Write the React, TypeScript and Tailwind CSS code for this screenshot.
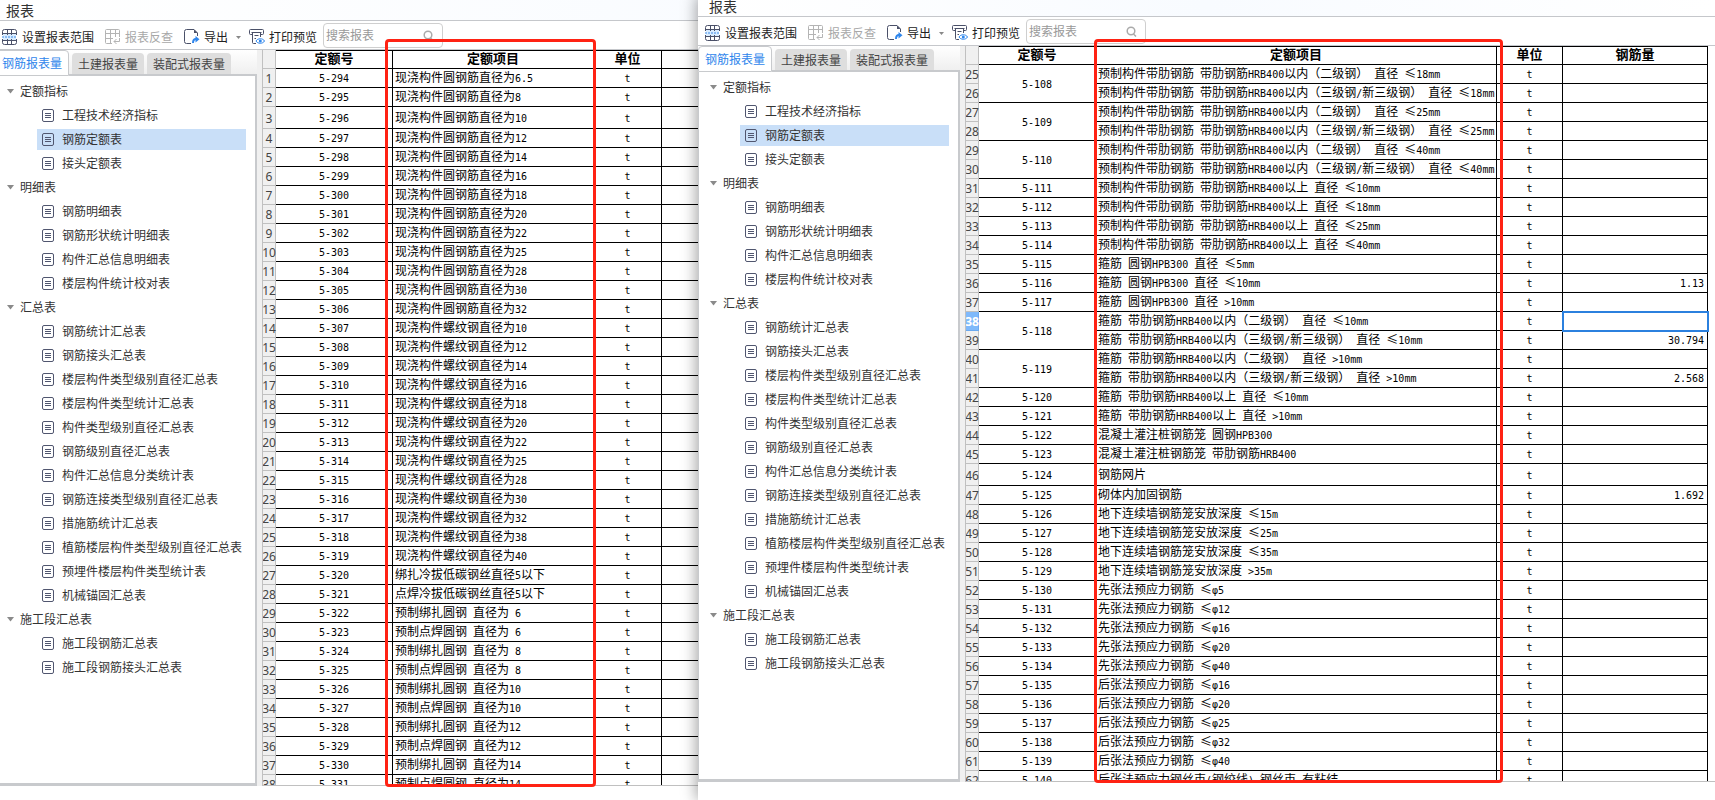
import { ReactNode } from "react";

interface QuotaRow {
  no: number;
  code?: string;
  span?: number;
  item: string;
  amount?: string;
  tall?: boolean;
  selected?: boolean;
}

interface SheetProps {
  rows: QuotaRow[];
  itemWidth: string;
  unitWidth: string;
  amountTitle?: string;
}

const barTypes = [6.5, 8, 10, 12, 14, 16, 18, 20, 22, 25, 28, 30, 32].map((d) => `现浇构件圆钢筋直径为${d}`);
const threadTypes = [10, 12, 14, 16, 18, 20, 22, 25, 28, 30, 32, 38, 40].map((d) => `现浇构件螺纹钢直径为${d}`);

const leftItems = [
  ...barTypes,
  ...threadTypes,
  "绑扎冷拔低碳钢丝直径5以下",
  "点焊冷拔低碳钢丝直径5以下",
  "预制绑扎圆钢 直径为 6",
  "预制点焊圆钢 直径为 6",
  "预制绑扎圆钢 直径为 8",
  "预制点焊圆钢 直径为 8",
  "预制绑扎圆钢 直径为10",
  "预制点焊圆钢 直径为10",
  "预制绑扎圆钢 直径为12",
  "预制点焊圆钢 直径为12",
  "预制绑扎圆钢 直径为14",
  "预制点焊圆钢 直径为14",
];

const leftRows: QuotaRow[] = leftItems.map((item, i) => ({
  no: i + 1,
  code: `5-${294 + i}`,
  item,
  tall: i === 2,
}));

const rightRows: QuotaRow[] = [
  { no: 25, code: "5-108", span: 2, item: "预制构件带肋钢筋 带肋钢筋HRB400以内（二级钢） 直径 ≤18mm" },
  { no: 26, item: "预制构件带肋钢筋 带肋钢筋HRB400以内（三级钢/新三级钢） 直径 ≤18mm" },
  { no: 27, code: "5-109", span: 2, item: "预制构件带肋钢筋 带肋钢筋HRB400以内（二级钢） 直径 ≤25mm" },
  { no: 28, item: "预制构件带肋钢筋 带肋钢筋HRB400以内（三级钢/新三级钢） 直径 ≤25mm" },
  { no: 29, code: "5-110", span: 2, item: "预制构件带肋钢筋 带肋钢筋HRB400以内（二级钢） 直径 ≤40mm" },
  { no: 30, item: "预制构件带肋钢筋 带肋钢筋HRB400以内（三级钢/新三级钢） 直径 ≤40mm" },
  { no: 31, code: "5-111", item: "预制构件带肋钢筋 带肋钢筋HRB400以上 直径 ≤10mm" },
  { no: 32, code: "5-112", item: "预制构件带肋钢筋 带肋钢筋HRB400以上 直径 ≤18mm" },
  { no: 33, code: "5-113", item: "预制构件带肋钢筋 带肋钢筋HRB400以上 直径 ≤25mm" },
  { no: 34, code: "5-114", item: "预制构件带肋钢筋 带肋钢筋HRB400以上 直径 ≤40mm" },
  { no: 35, code: "5-115", item: "箍筋 圆钢HPB300 直径 ≤5mm" },
  { no: 36, code: "5-116", item: "箍筋 圆钢HPB300 直径 ≤10mm", amount: "1.13" },
  { no: 37, code: "5-117", item: "箍筋 圆钢HPB300 直径 >10mm" },
  { no: 38, code: "5-118", span: 2, item: "箍筋 带肋钢筋HRB400以内（二级钢） 直径 ≤10mm", selected: true },
  { no: 39, item: "箍筋 带肋钢筋HRB400以内（三级钢/新三级钢） 直径 ≤10mm", amount: "30.794" },
  { no: 40, code: "5-119", span: 2, item: "箍筋 带肋钢筋HRB400以内（二级钢） 直径 >10mm" },
  { no: 41, item: "箍筋 带肋钢筋HRB400以内（三级钢/新三级钢） 直径 >10mm", amount: "2.568" },
  { no: 42, code: "5-120", item: "箍筋 带肋钢筋HRB400以上 直径 ≤10mm" },
  { no: 43, code: "5-121", item: "箍筋 带肋钢筋HRB400以上 直径 >10mm" },
  { no: 44, code: "5-122", item: "混凝土灌注桩钢筋笼 圆钢HPB300" },
  { no: 45, code: "5-123", item: "混凝土灌注桩钢筋笼 带肋钢筋HRB400" },
  { no: 46, code: "5-124", item: "钢筋网片", tall: true },
  { no: 47, code: "5-125", item: "砌体内加固钢筋", amount: "1.692" },
  { no: 48, code: "5-126", item: "地下连续墙钢筋笼安放深度 ≤15m" },
  { no: 49, code: "5-127", item: "地下连续墙钢筋笼安放深度 ≤25m" },
  { no: 50, code: "5-128", item: "地下连续墙钢筋笼安放深度 ≤35m" },
  { no: 51, code: "5-129", item: "地下连续墙钢筋笼安放深度 >35m" },
  { no: 52, code: "5-130", item: "先张法预应力钢筋 ≤φ5" },
  { no: 53, code: "5-131", item: "先张法预应力钢筋 ≤φ12" },
  { no: 54, code: "5-132", item: "先张法预应力钢筋 ≤φ16" },
  { no: 55, code: "5-133", item: "先张法预应力钢筋 ≤φ20" },
  { no: 56, code: "5-134", item: "先张法预应力钢筋 ≤φ40" },
  { no: 57, code: "5-135", item: "后张法预应力钢筋 ≤φ16" },
  { no: 58, code: "5-136", item: "后张法预应力钢筋 ≤φ20" },
  { no: 59, code: "5-137", item: "后张法预应力钢筋 ≤φ25" },
  { no: 60, code: "5-138", item: "后张法预应力钢筋 ≤φ32" },
  { no: 61, code: "5-139", item: "后张法预应力钢筋 ≤φ40" },
  { no: 62, code: "5-140", item: "后张法预应力钢丝束(钢绞线) 钢丝束 有粘结" },
];

const tree = [
  { title: "定额指标", items: ["工程技术经济指标", "钢筋定额表", "接头定额表"] },
  { title: "明细表", items: ["钢筋明细表", "钢筋形状统计明细表", "构件汇总信息明细表", "楼层构件统计校对表"] },
  {
    title: "汇总表",
    items: [
      "钢筋统计汇总表",
      "钢筋接头汇总表",
      "楼层构件类型级别直径汇总表",
      "楼层构件类型统计汇总表",
      "构件类型级别直径汇总表",
      "钢筋级别直径汇总表",
      "构件汇总信息分类统计表",
      "钢筋连接类型级别直径汇总表",
      "措施筋统计汇总表",
      "植筋楼层构件类型级别直径汇总表",
      "预埋件楼层构件类型统计表",
      "机械锚固汇总表",
    ],
  },
  { title: "施工段汇总表", items: ["施工段钢筋汇总表", "施工段钢筋接头汇总表"] },
];

// Latin characters are half as wide as the Chinese ones in the sheet
function SheetText({ text }: { text: string }) {
  return (
    <>
      {text.split(/([\x20-\x7eφ]+)/).map((part, i) =>
        i % 2 ? (
          <span key={i} className="font-['DejaVu_Sans_Mono',monospace] text-[10px] leading-none">{part}</span>
        ) : (
          part
        )
      )}
    </>
  );
}

function RangeIcon() {
  return (
    <svg width="15" height="16" viewBox="0 0 15 16" fill="none" stroke="#4a5068">
      <rect x="1" y="5" width="13" height="6" fill="#d9ecff" stroke="none" />
      <path d="M.5 6V2.500a2 2 0 0 1 2-2h10a2 2 0 0 1 2 2V6M5.500.5V6M9.500.5V6M.5 4.500h14M.5 10v3.500a2 2 0 0 0 2 2h10a2 2 0 0 0 2-2V10M5.500 10v5.500M9.500 10v5.500M.5 11.500h14" />
      <path d="M0 8h15" stroke="#3b8ae6" strokeDasharray="2 1" />
    </svg>
  );
}

function TraceIcon() {
  return (
    <svg width="15" height="16" viewBox="0 0 15 16" fill="none" stroke="#b4b4b4">
      <path d="M14.500 8V1.500a1 1 0 0 0-1-1h-12a1 1 0 0 0-1 1v12a1 1 0 0 0 1 1H7M5.500.5v14M10.500.5V8M.5 4.500h14M.5 9.500H8" />
      <path d="M14.500 9v3.500H9M11.500 10L9 12.500l2.500 2.500" />
    </svg>
  );
}

function ExportIcon() {
  return (
    <svg width="16" height="16" viewBox="0 0 16 16" fill="none">
      <path d="M7 14.500H2.500a2 2 0 0 1-2-2v-10a2 2 0 0 1 2-2H10l3.500 3.500v3" stroke="#4a5068" />
      <path d="M10 .5V4h3.500z" fill="#4a5068" />
      <path d="M9 14c0-2.500 1-4 3-4" stroke="#2f86ec" strokeWidth="2" />
      <path d="M11.500 7l4 3.200-4 3.200z" fill="#2f86ec" />
    </svg>
  );
}

function PreviewIcon() {
  return (
    <svg width="16" height="16" viewBox="0 0 16 16" fill="none">
      <path d="M3 5.500H1.500a1 1 0 0 1-1-1v-3a1 1 0 0 1 1-1h12a1 1 0 0 1 1 1v3a1 1 0 0 1-1 1H12M2.500 3.500h10M3.500 3.500v10a1 1 0 0 0 1 1H7M11.500 3.500V8M5.500 6.500h4M5.500 9.500H7" stroke="#4a5068" />
      <path d="M7 12c1.500-3 7-3 8.500 0-1.500 3-7 3-8.500 0z" fill="#fff" stroke="#2f86ec" />
      <circle cx="11.300" cy="12" r="1.500" fill="#2f86ec" />
    </svg>
  );
}

function ReportIcon() {
  return (
    <svg width="12" height="13" viewBox="0 0 12 13" fill="none" stroke="#50566f">
      <rect x=".5" y=".5" width="11" height="12" rx="1.500" />
      <path d="M3 4.500h6M3 6.500h6M3 8.500h6" />
    </svg>
  );
}

function Caret() {
  return (
    <svg width="7" height="5" viewBox="0 0 7 5" className="shrink-0">
      <path d="M0 0h7L3.500 4.500z" fill="#8a8a8a" />
    </svg>
  );
}

function ToolButton({ icon, label, disabled }: { icon: ReactNode; label: string; disabled?: boolean }) {
  return (
    <button disabled={disabled} className="flex shrink-0 items-center gap-[5px] pt-[3px] text-[#222] disabled:text-[#a8a8a8]">
      <span className="w-[15px]">{icon}</span>
      {label}
    </button>
  );
}

function Toolbar() {
  return (
    <div className="flex h-[29px] shrink-0 items-center border-b border-[#c5c7cb] bg-white pl-[7px]">
      <div className="flex items-center gap-[11px]">
        <ToolButton icon={<RangeIcon />} label="设置报表范围" />
        <ToolButton icon={<TraceIcon />} label="报表反查" disabled />
        <ToolButton icon={<ExportIcon />} label="导出" />
      </div>
      <button aria-label="导出选项" className="mx-2 pt-1">
        <svg width="5" height="3" viewBox="0 0 5 3">
          <path d="M0 0h5L2.500 3z" fill="#888" />
        </svg>
      </button>
      <ToolButton icon={<PreviewIcon />} label="打印预览" />
      <label className="ml-[6px] flex h-[25px] w-[120px] items-center rounded-sm border border-[#cfcfcf] bg-white px-[2px]">
        <input aria-label="搜索报表" placeholder="搜索报表" className="w-[90px] flex-1 outline-none placeholder:text-[#999]" />
        <svg width="11" height="11" viewBox="0 0 11 11" fill="none" stroke="#aaa" className="mr-[6px]">
          <circle cx="5" cy="5" r="3.800" strokeWidth="1.500" />
          <path d="M7.500 8l2.500 2.500" strokeWidth="1.500" />
        </svg>
      </label>
    </div>
  );
}

function Sidebar() {
  return (
    <aside className="flex w-[262px] shrink-0 flex-col border-b-[3px] border-[#c8cacd]">
      <div className="flex h-[26px] shrink-0 bg-linear-to-b from-white to-[#eeeeee]">
        <button className="w-[74px] rounded-t border border-[#c8cacd] bg-white text-[#2f86ec]">钢筋报表量</button>
        <div className="flex flex-1 items-end gap-[3px] border-b-2 border-[#c8cacd] pl-[3px]">
          <button className="h-[21px] w-[72px] rounded-t bg-[#dedede] text-[#444]">土建报表量</button>
          <button className="h-[21px] w-[84px] rounded-t bg-[#dedede] text-[#444]">装配式报表量</button>
        </div>
      </div>
      <nav className="min-h-0 flex-1 overflow-hidden border-r-2 border-l border-[#c8cacd] bg-white pt-[3px] pr-[9px]">
        {tree.map((group) => (
          <div key={group.title}>
            <button className="flex h-6 items-center gap-[6px] pl-[11px] text-[#333]">
              <Caret />
              {group.title}
            </button>
            <ul>
              {group.items.map((item) => (
                <li key={item} className="flex h-6 items-center pl-[41px]">
                  <a
                    href="#"
                    className={`flex h-[21px] flex-1 items-center gap-2 pl-[5px] whitespace-nowrap text-[#333] ${
                      item === "钢筋定额表" ? "bg-[#c9dff8]" : ""
                    }`}
                  >
                    <ReportIcon />
                    {item}
                  </a>
                </li>
              ))}
            </ul>
          </div>
        ))}
      </nav>
    </aside>
  );
}

function Sheet({ rows, itemWidth, unitWidth, amountTitle }: SheetProps) {
  const head = "border-r border-y border-black p-0 pb-[3px] text-[13px] leading-[14px] font-bold";
  const cell = "border-r border-b border-black p-0 pb-[2px] leading-[14px]";

  return (
    <div className="min-w-0 flex-1 overflow-hidden border-b border-l border-[#c0c0c0] bg-white">
      <table className="w-0 table-fixed border-separate border-spacing-0 font-['Noto_Sans_CJK_SC',sans-serif] text-black">
        <colgroup>
          <col className="w-[13px]" />
          <col className="w-[117px]" />
          <col className={itemWidth} />
          <col className={unitWidth} />
          <col className="w-[145px]" />
        </colgroup>
        <thead>
          <tr className="h-[19px]">
            <td className="border-r border-b border-[#c0c0c0] bg-[#f0f0f0] p-0" />
            <th className={head}>定额号</th>
            <th className={head}>定额项目</th>
            <th className={head}>单位</th>
            <th className={head}>{amountTitle}</th>
          </tr>
        </thead>
        <tbody>
          {rows.map((row) => (
            <tr key={row.no} className={row.tall ? "h-[22px]" : "h-[19px]"}>
              <th
                className={`border-r border-b p-0 font-['Noto_Sans',sans-serif] leading-4 ${
                  row.selected ? "border-[#6aa9f0] bg-[#7fb9fb] font-bold text-white" : "border-[#c0c0c0] bg-[#f0f0f0] font-normal text-[#444]"
                }`}
              >
                <div className="flex justify-center pt-[2px]">{row.no}</div>
              </th>
              {row.code && (
                <td rowSpan={row.span} className={`${cell} text-center`}>
                  <SheetText text={row.code} />
                </td>
              )}
              <td className={`${cell} pl-[2px] whitespace-nowrap`}>
                <SheetText text={row.item} />
              </td>
              <td className={`${cell} text-center`}>
                <SheetText text="t" />
              </td>
              <td className={`${cell} pr-[3px] text-right ${row.selected ? "outline-2 -outline-offset-1 outline-[#2b80de]" : ""}`}>
                <SheetText text={row.amount ?? ""} />
              </td>
            </tr>
          ))}
        </tbody>
      </table>
    </div>
  );
}

function ReportWindow({ children }: { children: ReactNode }) {
  return (
    <div className="flex h-full flex-col bg-white pb-[18px]">
      <header className="flex h-[21px] shrink-0 items-center border-b border-[#c5c7cb] bg-linear-to-r from-white via-[#f8fbff] to-white pl-[11px] text-sm text-[#333]">
        报表
      </header>
      <Toolbar />
      <div className="flex min-h-0 flex-1 bg-[#f0f0f0]">
        <Sidebar />
        <div className="w-[5px] shrink-0 bg-[#f0f0f0]" />
        {children}
      </div>
    </div>
  );
}

export default function App() {
  return (
    <div className="relative h-screen overflow-hidden bg-white font-['Noto_Sans_CJK_SC',sans-serif] text-xs">
      <div className="absolute top-0 right-0 -bottom-1 -left-[5px]">
        <ReportWindow>
          <Sheet rows={leftRows} itemWidth="w-[201px]" unitWidth="w-[68px]" />
        </ReportWindow>
        <div className="absolute top-[39px] left-[390px] h-[748px] w-[211px] rounded-sm border-[3px] border-[#ff2213]" />
      </div>
      <div className="absolute -top-1 right-0 bottom-0 left-[698px] shadow-[-2px_0_14px_rgba(0,0,0,0.35)]">
        <ReportWindow>
          <Sheet rows={rightRows} itemWidth="w-[401px]" unitWidth="w-[66px]" amountTitle="钢筋量" />
        </ReportWindow>
        <div className="absolute top-[43px] left-[396px] h-[744px] w-[409px] rounded-sm border-[3px] border-[#ff2213]" />
      </div>
    </div>
  );
}
